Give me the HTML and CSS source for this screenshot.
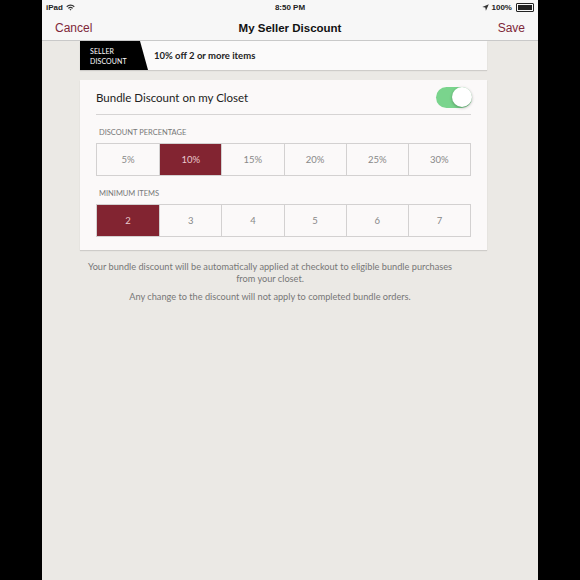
FILE: index.html
```html
<!DOCTYPE html>
<html lang="en">
<head>
    <meta charset="UTF-8">
    <meta name="viewport" content="width=device-width, initial-scale=1.0">
    <title>My Seller Discount</title>
    <link rel="stylesheet" href="styles.css">
</head>
<body>
    <div class="screen">
        <div class="status-bar">
            <div class="status-left">
                iPad
                <svg class="wifi" width="9" height="7" viewBox="0 0 9 7">
                    <path d="M0.3 2.3 A6 6 0 0 1 8.7 2.3 L7.8 3.2 A4.7 4.7 0 0 0 1.2 3.2 Z" fill="#333"/>
                    <path d="M1.9 3.9 A3.8 3.8 0 0 1 7.1 3.9 L6.2 4.8 A2.5 2.5 0 0 0 2.8 4.8 Z" fill="#333"/>
                    <path d="M3.5 5.5 A1.5 1.5 0 0 1 5.5 5.5 L4.5 6.6 Z" fill="#333"/>
                </svg>
            </div>
            <div class="status-time">8:50 PM</div>
            <div class="status-right">
                <svg width="7" height="7" viewBox="0 0 7 7">
                    <path d="M6.8 0.2 L0.3 3 L3.3 3.6 L3.9 6.7 Z" fill="#333"/>
                </svg>
                100%
                <span class="battery"><span class="battery-level"></span></span>
            </div>
        </div>

        <nav class="nav-bar">
            <a class="nav-action">Cancel</a>
            <h1 class="nav-title">My Seller Discount</h1>
            <a class="nav-action">Save</a>
        </nav>

        <div class="content">
            <div class="banner">
                <div class="banner-tag">SELLER<br>DISCOUNT</div>
                <div class="banner-text">10% off 2 or more items</div>
            </div>

            <div class="card">
                <div class="card-title-row">
                    <span class="card-title">Bundle Discount on my Closet</span>
                    <span class="toggle on"><span class="knob"></span></span>
                </div>

                <div class="section-label">DISCOUNT PERCENTAGE</div>
                <div class="segments">
                    <div class="segment">5%</div>
                    <div class="segment selected">10%</div>
                    <div class="segment">15%</div>
                    <div class="segment">20%</div>
                    <div class="segment">25%</div>
                    <div class="segment">30%</div>
                </div>

                <div class="section-label">MINIMUM ITEMS</div>
                <div class="segments">
                    <div class="segment selected">2</div>
                    <div class="segment">3</div>
                    <div class="segment">4</div>
                    <div class="segment">5</div>
                    <div class="segment">6</div>
                    <div class="segment">7</div>
                </div>
            </div>

            <div class="notes">
                <p>Your bundle discount will be automatically applied at checkout to eligible bundle purchases from your closet.</p>
                <p>Any change to the discount will not apply to completed bundle orders.</p>
            </div>
        </div>
    </div>
</body>
</html>
```

FILE: styles.css
```css
body {
    margin: 0;
    padding: 0;
    background-color: #000;
    font-family: Lato, "Open Sans", sans-serif;
}
.screen {
    width: 496px;
    height: 580px;
    margin: 0 auto;
    background-color: #ebe9e5;
    overflow: hidden;
}
.status-bar {
    height: 14px;
    background-color: #f7f7f7;
    display: flex;
    align-items: center;
    justify-content: space-between;
    padding: 0 4px;
    font-family: "Liberation Sans", Arial, sans-serif;
    font-size: 8px;
    font-weight: bold;
    color: #222;
}
.status-left,
.status-right {
    width: 80px;
    display: flex;
    align-items: center;
    gap: 3px;
}
.status-right {
    justify-content: flex-end;
}
.battery {
    width: 14px;
    height: 5px;
    border: 1px solid #222;
    border-radius: 1px;
    padding: 1px;
    margin-left: 1px;
    display: flex;
}
.battery-level {
    flex: 1;
    background-color: #222;
}
.nav-bar {
    height: 26px;
    background-color: #f7f7f7;
    border-bottom: 1px solid #c9c9c9;
    display: flex;
    align-items: center;
    justify-content: space-between;
    padding: 0 13px;
    font-family: "Liberation Sans", Arial, sans-serif;
}
.nav-action {
    color: #7f2839;
    font-size: 12px;
    width: 60px;
    margin-top: 2px;
}
.nav-action:last-child {
    text-align: right;
}
.nav-title {
    margin: 2px 0 0 0;
    font-size: 11.5px;
    font-weight: bold;
    color: #111;
}
.content {
    margin-left: 38px;
    width: 407px;
}
.banner {
    height: 29px;
    display: flex;
    align-items: center;
    background-color: #fbfafa;
    box-shadow: 0 1px 1px rgba(0, 0, 0, 0.12);
}
.banner-tag {
    width: 58px;
    height: 29px;
    padding-left: 10px;
    display: flex;
    align-items: center;
    background-color: #000;
    color: #fff;
    font-size: 7px;
    line-height: 10px;
    letter-spacing: 0.1px;
    clip-path: polygon(0 0, 60px 0, 68px 100%, 0 100%);
}
.banner-text {
    margin-left: 6px;
    font-size: 9.5px;
    font-weight: bold;
    color: #222;
}
.card {
    margin-top: 10px;
    background-color: #fbf9f9;
    padding: 0 16px 13px 16px;
    box-shadow: 0 1px 1px rgba(0, 0, 0, 0.12);
}
.card-title-row {
    height: 34px;
    border-bottom: 1px solid #d6d4d4;
    display: flex;
    align-items: center;
    justify-content: space-between;
}
.card-title {
    font-size: 11.5px;
    color: #222;
}
.toggle {
    width: 36px;
    height: 21px;
    border-radius: 11px;
    background-color: #7ad48d;
    display: flex;
    align-items: center;
    justify-content: flex-end;
    margin-right: -1px;
}
.knob {
    width: 20px;
    height: 20px;
    border-radius: 50%;
    background-color: #fff;
    box-shadow: 0 1px 3px rgba(0, 0, 0, 0.3);
}
.section-label {
    font-size: 7.5px;
    color: #777;
    padding-left: 3px;
    margin-top: 13px;
    margin-bottom: 6px;
}
.segments {
    display: grid;
    grid-template-columns: repeat(6, 1fr);
    border: 1px solid #d3d1d1;
    height: 31px;
}
.segment {
    display: flex;
    align-items: center;
    justify-content: center;
    font-size: 9.5px;
    color: #888;
    border-left: 1px solid #d3d1d1;
}
.segment:first-child {
    border-left: none;
}
.segment.selected {
    background-color: #822431;
    color: #e9c9cd;
}
.notes {
    width: 370px;
    margin-top: 11px;
    margin-left: 5px;
    text-align: center;
    font-size: 9.2px;
    line-height: 12px;
    color: #777;
}
.notes p {
    margin: 0 0 6px 0;
}
```
